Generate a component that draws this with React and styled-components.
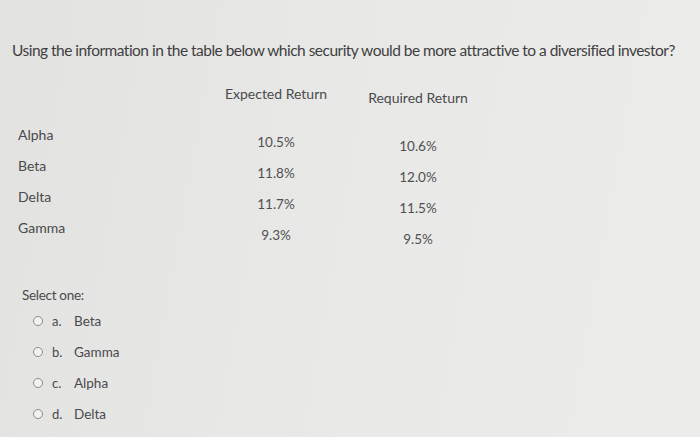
import React from "react";
import styled, { createGlobalStyle } from "styled-components";

const Global = createGlobalStyle`
  html, body { margin: 0; padding: 0; }
  body {
    width: 700px; height: 437px; overflow: hidden;
    background: linear-gradient(100deg, #e2e2e0 0%, #e8e8e6 45%, #ececea 100%);
    font-family: Lato, "Open Sans", sans-serif;
    color: #4b4b4d;
  }
`;

const Page = styled.div`
  padding: 40px 0 0 12px;
  display: flex;
  flex-direction: column;
`;

const Question = styled.div`
  font-size: 15.5px;
  color: #3f3f42;
  letter-spacing: -0.52px;
  line-height: 20px;
  white-space: nowrap;
`;

const Table = styled.div`
  display: grid;
  grid-template-columns: 192px 144px 140px;
  margin-top: 24px;
`;

const Column = styled.div`
  display: flex;
  flex-direction: column;
  align-items: ${(p) => (p.$center ? "center" : "flex-start")};
  padding-top: ${(p) => p.$offset}px;
  padding-left: ${(p) => p.$left || 0}px;
`;

const Header = styled.div`
  font-size: 14px;
  line-height: 20px;
  height: 20px;
  margin-bottom: 28px;
  color: #4a4a4d;
`;

const Label = styled.div`
  font-size: 14px;
  line-height: 20px;
  height: 31px;
  color: #4a4a4d;
`;

const Value = styled.div`
  font-size: 13.5px;
  line-height: 20px;
  height: 31px;
  color: #505053;
`;

const Select = styled.div`
  margin-top: 25px;
  padding-left: 10px;
  font-size: 13.5px;
  line-height: 20px;
  color: #4a4a4d;
  letter-spacing: -0.3px;
`;

const Options = styled.div`
  display: flex;
  flex-direction: column;
  padding-left: 21px;
`;

const Option = styled.div`
  display: flex;
  align-items: center;
  height: 31px;
  font-size: 13.5px;
  color: #4a4a4d;
`;

const Radio = styled.span`
  width: 10px;
  height: 10px;
  border-radius: 50%;
  border: 1.4px solid #8a8a8c;
  background: #f2f2f0;
  box-sizing: border-box;
  margin-right: 9px;
`;

const Letter = styled.span`
  width: 22px;
  font-size: 13px;
`;

const rows = [
  ["Alpha", "10.5%", "10.6%"],
  ["Beta", "11.8%", "12.0%"],
  ["Delta", "11.7%", "11.5%"],
  ["Gamma", "9.3%", "9.5%"],
];

const options = [
  ["a.", "Beta"],
  ["b.", "Gamma"],
  ["c.", "Alpha"],
  ["d.", "Delta"],
];

export default function App() {
  return (
    <>
      <Global />
      <Page>
        <Question>
          Using the information in the table below which security would be more attractive to a diversified investor?
        </Question>
        <Table>
          <Column $offset={41} $left={6}>
            {rows.map((r) => (
              <Label key={r[0]}>{r[0]}</Label>
            ))}
          </Column>
          <Column $offset={0} $center>
            <Header>Expected Return</Header>
            {rows.map((r) => (
              <Value key={r[0]}>{r[1]}</Value>
            ))}
          </Column>
          <Column $offset={4} $center>
            <Header>Required Return</Header>
            {rows.map((r) => (
              <Value key={r[0]}>{r[2]}</Value>
            ))}
          </Column>
        </Table>
        <Select>Select one:</Select>
        <Options>
          {options.map((o) => (
            <Option key={o[0]}>
              <Radio />
              <Letter>{o[0]}</Letter>
              {o[1]}
            </Option>
          ))}
        </Options>
      </Page>
    </>
  );
}
